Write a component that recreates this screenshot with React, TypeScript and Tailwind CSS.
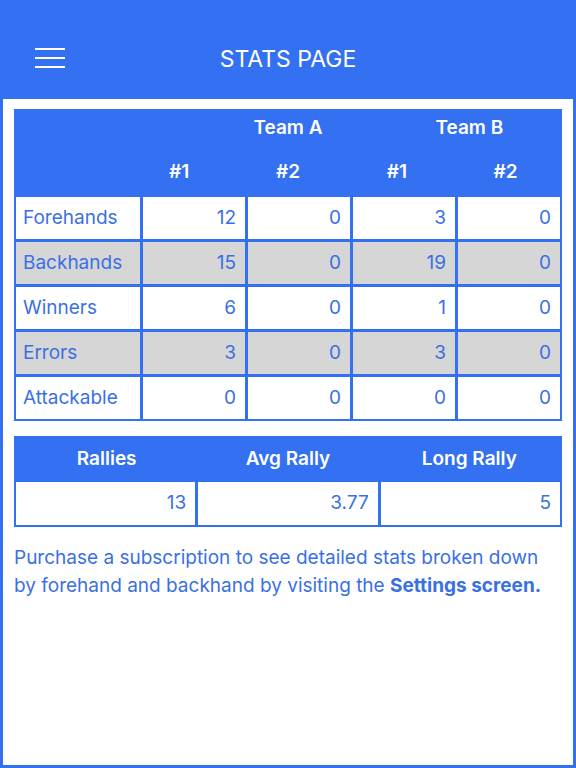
import React from 'react';

const rows = [
  { label: 'Forehands', vals: [12, 0, 3, 0], gray: false },
  { label: 'Backhands', vals: [15, 0, 19, 0], gray: true },
  { label: 'Winners', vals: [6, 0, 1, 0], gray: false },
  { label: 'Errors', vals: [3, 0, 3, 0], gray: true },
  { label: 'Attackable', vals: [0, 0, 0, 0], gray: false },
];

export default function App() {
  return (
    <div className="w-[576px] h-[768px] flex flex-col bg-[#3370f2] font-['Inter','Liberation_Sans',sans-serif] text-[#3a70e4]">
      <header className="h-[99px] relative flex items-center justify-center pt-[20px] shrink-0">
        <button className="absolute left-[35px] top-[48px] flex flex-col gap-[7px]">
          <span className="block w-[30px] h-[2px] bg-white" />
          <span className="block w-[30px] h-[2px] bg-white" />
          <span className="block w-[30px] h-[2px] bg-white" />
        </button>
        <h1 className="text-white text-[23px]">STATS PAGE</h1>
      </header>

      <main className="flex-1 bg-white mx-[3px] mb-[3px] px-[11px] pt-[10px]">
        {/* shot table */}
        <div className="bg-[#3370f2] pb-[2px] px-[2px]">
          <div className="grid grid-cols-3 h-[38px] items-center text-white font-semibold text-[19px]">
            <div />
            <div className="text-center">Team A</div>
            <div className="text-center">Team B</div>
          </div>
          <div className="grid grid-cols-5 h-[50px] items-center text-white font-semibold text-[19px]">
            <div />
            <div className="text-center">#1</div>
            <div className="text-center">#2</div>
            <div className="text-center">#1</div>
            <div className="text-center">#2</div>
          </div>
          <div className="flex flex-col gap-[3px]">
            {rows.map((r) => (
              <div key={r.label} className="grid grid-cols-[124px_1fr_1fr_1fr_1fr] gap-[3px] h-[42px] text-[19px]">
                <div className={`flex items-center pl-[7px] ${r.gray ? 'bg-[#d6d6d6]' : 'bg-white'}`}>{r.label}</div>
                {r.vals.map((v, i) => (
                  <div key={i} className={`flex items-center justify-end pr-[9px] ${r.gray ? 'bg-[#d6d6d6]' : 'bg-white'}`}>{v}</div>
                ))}
              </div>
            ))}
          </div>
        </div>

        {/* rally table */}
        <div className="mt-[15px] bg-[#3370f2] pb-[2px] px-[2px]">
          <div className="grid grid-cols-3 h-[46px] items-center text-white font-semibold text-[19px]">
            <div className="text-center">Rallies</div>
            <div className="text-center">Avg Rally</div>
            <div className="text-center">Long Rally</div>
          </div>
          <div className="grid grid-cols-3 gap-[3px] h-[43px] text-[19px]">
            <div className="bg-white flex items-center justify-end pr-[9px]">13</div>
            <div className="bg-white flex items-center justify-end pr-[9px]">3.77</div>
            <div className="bg-white flex items-center justify-end pr-[9px]">5</div>
          </div>
        </div>

        <p className="mt-[17px] pr-[12px] text-[19px] leading-[28px]">
          Purchase a subscription to see detailed stats broken down by forehand and backhand by visiting the{' '}
          <span className="font-bold">Settings screen.</span>
        </p>
      </main>
    </div>
  );
}
